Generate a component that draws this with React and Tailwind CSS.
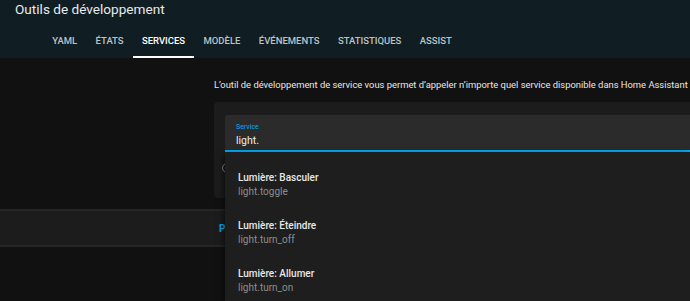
import React from "react";

const tabs = ["YAML", "ÉTATS", "SERVICES", "MODÈLE", "ÉVÉNEMENTS", "STATISTIQUES", "ASSIST"];

const services = [
  { name: "Lumière: Basculer", id: "light.toggle" },
  { name: "Lumière: Éteindre", id: "light.turn_off" },
  { name: "Lumière: Allumer", id: "light.turn_on" },
];

const App = () => {
  return (
    <div className="relative w-[690px] h-[301px] overflow-hidden bg-[#111111] font-['Roboto',sans-serif]">
      {/* Header */}
      <header className="h-[58px] bg-[#101e24] flex flex-col">
        <h1 className="pl-[15px] pt-[1px] text-[13.6px] leading-[17px] text-[#e8eaeb]">
          Outils de développement
        </h1>
        <nav className="mt-auto flex pl-[43px]">
          {tabs.map((t) => {
            const active = t === "SERVICES";
            return (
              <div
                key={t}
                className={
                  "relative h-[34px] px-[9.2px] flex items-center text-[9.5px] font-medium " +
                  (active ? "text-white" : "text-[#bcc2c5]")
                }
              >
                {t}
                {active && <span className="absolute left-0 right-0 bottom-0 h-[2px] bg-white" />}
              </div>
            );
          })}
        </nav>
      </header>

      {/* Main content */}
      <div className="flex flex-col">
        <div className="flex">
          <div className="w-[214px] shrink-0" />
          <div className="flex-1 min-w-0">
            <p className="pt-[21px] text-[9.4px] leading-[12px] text-[#e8e8e8] whitespace-nowrap">
              L’outil de développement de service vous permet d’appeler n’importe quel service disponible dans Home Assistant
            </p>
            <div className="mt-[11px] h-[96px] w-[520px] rounded-[4px] bg-[#1c1c1c] pt-[13px] pl-[11px]">
              <div className="h-[37px] rounded-t-[3px] bg-[#2b2b2b] border-b-2 border-[#03a9f4] pl-[11px] pt-[8px]">
                <div className="text-[7px] leading-[9px] text-[#03a9f4]">Service</div>
                <div className="mt-[3px] text-[10.5px] leading-[12px] text-[#ececec]">light.</div>
              </div>
              <div className="mt-[11px] -ml-[3px] w-[10px] h-[10px] rounded-full border border-[#8f8f8f]" />
            </div>
          </div>
        </div>

        {/* Bottom action bar */}
        <div className="mt-[11px] h-[38px] bg-[#1c1c1c] border-y-2 border-[#262626] flex items-center pl-[219px]">
          <span className="text-[10px] font-bold text-[#03a9f4]">P</span>
        </div>
      </div>

      {/* Service dropdown */}
      <ul className="absolute left-[225px] top-[152px] right-0 bottom-0 bg-[#1e1e1e] pt-[8px] shadow-[-2px_2px_6px_rgba(0,0,0,0.5)]">
        {services.map((s) => (
          <li key={s.id} className="h-[48px] pl-[13px] flex flex-col justify-center">
            <span className="text-[10px] leading-[13px] font-medium text-[#e8e8e8]">{s.name}</span>
            <span className="mt-[2px] text-[10px] leading-[12px] text-[#8d8d8d]">{s.id}</span>
          </li>
        ))}
      </ul>
    </div>
  );
};

export default App;
